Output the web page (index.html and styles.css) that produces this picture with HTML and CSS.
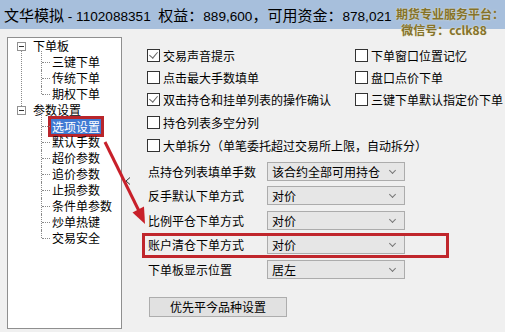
FILE: index.html
```html
<!DOCTYPE html>
<html lang="zh">
<head>
<meta charset="utf-8">
<title>选项设置</title>
<link rel="stylesheet" href="styles.css">
</head>
<body>
<div class="titlebar">
  <span class="title">文华模拟<span class="num"> - 1102088351&nbsp;&nbsp;</span>权益：<span class="num">889,600</span>，可用资金：<span class="num">878,021</span></span>
  <div class="watermark">
    <div>期货专业服务平台：</div>
    <div class="wm2">微信号：cclk88</div>
  </div>
</div>
<div class="main">
  <div class="tree">
    <ul class="lvl1">
      <li class="group first">
        <div class="row"><span class="exp"></span><span class="txt">下单板</span></div>
        <ul class="lvl2">
          <li><span class="txt">三键下单</span></li>
          <li><span class="txt">传统下单</span></li>
          <li><span class="txt">期权下单</span></li>
        </ul>
      </li>
      <li class="group">
        <div class="row"><span class="exp"></span><span class="txt">参数设置</span></div>
        <ul class="lvl2">
          <li><span class="txt sel">选项设置</span></li>
          <li><span class="txt">默认手数</span></li>
          <li><span class="txt">超价参数</span></li>
          <li><span class="txt">追价参数</span></li>
          <li><span class="txt">止损参数</span></li>
          <li><span class="txt">条件单参数</span></li>
          <li><span class="txt">炒单热键</span></li>
          <li><span class="txt">交易安全</span></li>
        </ul>
      </li>
    </ul>
  </div>
  <div class="splitter">
    <svg class="chev" width="6" height="8" viewBox="0 0 6 8"><path d="M5 0.5 L1 4 L5 7.5" fill="none" stroke="#333" stroke-width="1"/></svg>
  </div>
  <div class="panel">
    <div class="checks">
      <label class="cb r1"><span class="box on"></span>交易声音提示</label>
      <label class="cb r1"><span class="box"></span>下单窗口位置记忆</label>
      <label class="cb r2"><span class="box"></span>点击最大手数填单</label>
      <label class="cb r2"><span class="box"></span>盘口点价下单</label>
      <label class="cb r3"><span class="box on"></span>双击持仓和挂单列表的操作确认</label>
      <label class="cb r3"><span class="box"></span>三键下单默认指定价下单</label>
      <label class="cb r4 wide"><span class="box"></span>持仓列表多空分列</label>
      <label class="cb r5 wide"><span class="box"></span>大单拆分（单笔委托超过交易所上限，自动拆分）</label>
    </div>
    <div class="form">
      <div class="frow"><span class="lbl">点持仓列表填单手数</span><span class="combo">该合约全部可用持仓</span></div>
      <div class="frow"><span class="lbl">反手默认下单方式</span><span class="combo">对价</span></div>
      <div class="frow"><span class="lbl">比例平仓下单方式</span><span class="combo">对价</span></div>
      <div class="frow marked"><span class="lbl">账户清仓下单方式</span><span class="combo">对价</span></div>
      <div class="frow"><span class="lbl">下单板显示位置</span><span class="combo">居左</span></div>
    </div>
    <button class="btn" type="button">优先平今品种设置</button>
  </div>
</div>
<svg class="arrow" width="505" height="332" viewBox="0 0 505 332">
  <line x1="105" y1="142" x2="139" y2="211" stroke="#c8202a" stroke-width="3"/>
  <polygon points="145,224 132.5,212.5 144,206.5" fill="#c8202a"/>
</svg>
</body>
</html>
```
FILE: styles.css
```css
* { box-sizing: border-box; }
html, body { margin: 0; padding: 0; }
body {
  width: 505px;
  height: 332px;
  overflow: hidden;
  background: #f0f0f0;
  font-family: "Liberation Sans", "Noto Sans CJK SC", sans-serif;
  font-size: 12px;
  color: #000;
  position: relative;
}
.titlebar {
  height: 29px;
  background: #a7bfdc;
  padding-left: 4px;
  font-family: "Noto Sans CJK SC", sans-serif;
  font-size: 15px;
  line-height: 30px;
  white-space: nowrap;
  position: relative;
}
.num {
  font-family: "Liberation Sans", sans-serif;
  font-size: 13.6px;
}
.watermark {
  position: absolute;
  left: 395px;
  top: 6px;
  font-family: "Noto Sans CJK SC", sans-serif;
  font-weight: bold;
  font-size: 12px;
  line-height: 16px;
  color: #857329;
  text-shadow: 0 0 2px #e8e2c8;
  text-align: center;
  width: 110px;
  z-index: 2;
}
.watermark .wm2 { margin-left: -12px; }
.main {
  display: flex;
  padding: 8px 0 0 7px;
}
.tree {
  width: 115px;
  height: 292px;
  background: #fff;
  border: 1px solid #8f8f8f;
  font-family: "Noto Sans CJK SC", sans-serif;
  font-size: 12px;
}
.tree ul { list-style: none; margin: 0; padding: 0; }
.group { position: relative; }
.group.first::before {
  content: "";
  position: absolute;
  left: 13px;
  top: 13px;
  height: 55px;
  border-left: 1px dotted #8a8a8a;
}
.row {
  height: 16px;
  display: flex;
  align-items: center;
  padding-left: 9px;
}
.exp {
  width: 9px;
  height: 9px;
  border: 1px solid #919191;
  background: #fff;
  position: relative;
  margin-right: 7px;
  flex: none;
}
.exp::after {
  content: "";
  position: absolute;
  left: 1px;
  top: 3px;
  width: 5px;
  height: 1px;
  background: #333;
}
.txt { line-height: 16px; white-space: nowrap; }
.lvl2 li {
  height: 16px;
  display: flex;
  align-items: center;
  padding-left: 44px;
  position: relative;
}
.lvl2 li::before {
  content: "";
  position: absolute;
  left: 33px;
  top: 0;
  height: 16px;
  border-left: 1px dotted #8a8a8a;
}
.lvl2 li:first-child::before { top: -3px; height: 19px; }
.lvl2 li:last-child::before { height: 8px; }
.lvl2 li::after {
  content: "";
  position: absolute;
  left: 34px;
  top: 8px;
  width: 8px;
  border-top: 1px dotted #8a8a8a;
}
.sel {
  background: #3f7ad3;
  color: #fff;
  padding: 0 1px;
  margin-left: -1px;
  line-height: 15px;
  outline: 3px solid #b8252b;
  outline-offset: 0;
}
.splitter {
  width: 25px;
  position: relative;
}
.chev { display: block; margin: 140px 0 0 3px; }
.panel {
  width: 300px;
  padding-top: 7px;
}
.checks {
  display: grid;
  grid-template-columns: 208px auto;
  grid-template-rows: 22px 22px 23px 23px 23px;
}
.cb {
  display: flex;
  align-items: center;
  white-space: nowrap;
  font-family: "Noto Sans CJK SC", sans-serif;
}
.cb.wide { grid-column: 1 / span 2; }
.box {
  width: 13px;
  height: 13px;
  border: 1px solid #333;
  background: #fff;
  margin-right: 3px;
  flex: none;
  position: relative;
}
.box.on::after {
  content: "";
  position: absolute;
  left: 3px;
  top: 0px;
  width: 4px;
  height: 7px;
  border-right: 1.5px solid #666;
  border-bottom: 1.5px solid #666;
  transform: rotate(40deg);
}
.form { margin-top: 2px; }
.frow {
  height: 24.5px;
  display: flex;
  align-items: center;
  position: relative;
  font-family: "Noto Sans CJK SC", sans-serif;
}
.lbl { width: 120px; padding-left: 1px; white-space: nowrap; }
.combo {
  width: 138px;
  height: 19px;
  background: #e6e6e6;
  border: 1px solid #acacac;
  padding-left: 4px;
  line-height: 17px;
  position: relative;
}
.combo::after {
  content: "";
  position: absolute;
  right: 9px;
  top: 5px;
  width: 4px;
  height: 4px;
  border-right: 1px solid #777;
  border-bottom: 1px solid #777;
  transform: rotate(45deg);
}
.marked::after {
  content: "";
  position: absolute;
  left: -5px;
  right: -2px;
  top: 0;
  bottom: -1px;
  border: 3px solid #c0262c;
  pointer-events: none;
}
.btn {
  display: block;
  margin: 15px 0 0 2px;
  width: 138px;
  height: 20px;
  background: #e1e1e1;
  border: 1px solid #adadad;
  font-family: "Noto Sans CJK SC", sans-serif;
  font-size: 12px;
  line-height: 16px;
  padding: 0;
  color: #000;
}
.arrow {
  position: absolute;
  left: 0;
  top: 0;
  pointer-events: none;
}
```
